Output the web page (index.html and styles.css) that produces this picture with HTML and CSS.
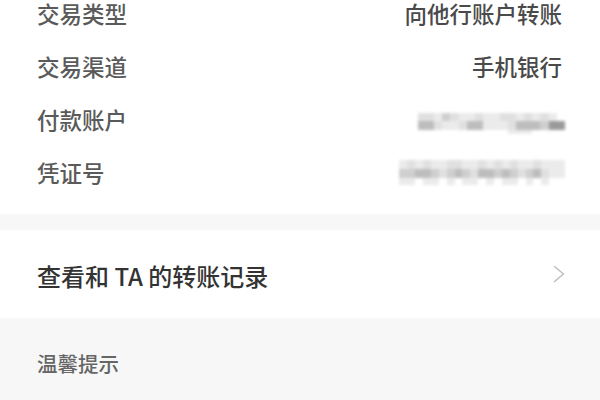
FILE: index.html
```html
<!DOCTYPE html>
<html lang="zh-CN">
<head>
<meta charset="utf-8">
<title>交易详情</title>
<link rel="stylesheet" href="styles.css">
</head>
<body>
<section class="card details">
  <div class="row row-first"><span class="label">交易类型</span><span class="value">向他行账户转账</span></div>
  <div class="row"><span class="label">交易渠道</span><span class="value">手机银行</span></div>
  <div class="row"><span class="label">付款账户</span>
    <span class="mosaic m-account">
      <i class="c2"></i><i class="c2"></i><i class="c1"></i><i class="c3"></i><i class="c2"></i><i class="c1"></i><i class="c1"></i><i class="c2"></i><i class="c1"></i><i class="c1"></i><i class="c2"></i><i class="c2"></i><i class="c1"></i><i class="c2"></i><i class="c1"></i><i class="c2"></i><i class="c1"></i><i class="c0"></i>
      <i class="c4"></i><i class="c4"></i><i class="c2"></i><i class="c1"></i><i class="c1"></i><i class="c2"></i><i class="c4"></i><i class="c4"></i><i class="c1"></i><i class="c1"></i><i class="c1"></i><i class="c2"></i><i class="c4"></i><i class="c4"></i><i class="c4"></i><i class="c3"></i><i class="c5"></i><i class="c5"></i>
      <i class="c0"></i><i class="c0"></i><i class="c0"></i><i class="c0"></i><i class="c0"></i><i class="c0"></i><i class="c0"></i><i class="c0"></i><i class="c0"></i><i class="c0"></i><i class="c0"></i><i class="c1"></i><i class="c1"></i><i class="c1"></i><i class="c0"></i><i class="c0"></i><i class="c0"></i><i class="c0"></i>
    </span>
  </div>
  <div class="row"><span class="label">凭证号</span>
    <span class="mosaic m-voucher">
      <i class="c1"></i><i class="c2"></i><i class="c1"></i><i class="c2"></i><i class="c1"></i><i class="c1"></i><i class="c2"></i><i class="c2"></i><i class="c1"></i><i class="c1"></i><i class="c2"></i><i class="c1"></i><i class="c2"></i><i class="c1"></i><i class="c2"></i><i class="c1"></i><i class="c1"></i><i class="c2"></i><i class="c1"></i><i class="c1"></i><i class="c1"></i>
      <i class="c3"></i><i class="c3"></i><i class="c4"></i><i class="c4"></i><i class="c3"></i><i class="c2"></i><i class="c3"></i><i class="c4"></i><i class="c3"></i><i class="c2"></i><i class="c4"></i><i class="c4"></i><i class="c3"></i><i class="c4"></i><i class="c3"></i><i class="c2"></i><i class="c3"></i><i class="c4"></i><i class="c2"></i><i class="c1"></i><i class="c1"></i>
      <i class="c1"></i><i class="c1"></i><i class="c0"></i><i class="c1"></i><i class="c1"></i><i class="c0"></i><i class="c1"></i><i class="c0"></i><i class="c1"></i><i class="c1"></i><i class="c0"></i><i class="c1"></i><i class="c0"></i><i class="c1"></i><i class="c1"></i><i class="c0"></i><i class="c1"></i><i class="c0"></i><i class="c1"></i><i class="c0"></i><i class="c0"></i>
    </span>
  </div>
</section>
<section class="card link">
  <span class="link-text">查看和 TA 的转账记录</span>
  <svg class="chevron" width="12" height="18" viewBox="0 0 12 18" aria-hidden="true">
    <polyline points="1.5,1.5 10.5,9 1.5,16.5" fill="none" stroke="#bdbdbd" stroke-width="1.5" stroke-linecap="round" stroke-linejoin="round"/>
  </svg>
</section>
<section class="tips">
  <h2 class="tips-title">温馨提示</h2>
</section>
</body>
</html>
```
FILE: styles.css
```css
html, body {
  margin: 0;
  padding: 0;
}
body {
  background: #f7f7f7;
  font-family: "Noto Sans CJK SC", "Noto Sans", sans-serif;
  width: 600px;
  height: 400px;
  overflow: hidden;
}
.card {
  background: #ffffff;
}
.details {
  padding-bottom: 15px;
  margin-bottom: 16px;
}
.row {
  height: 53px;
  display: flex;
  align-items: center;
  justify-content: space-between;
  padding: 0 38px 0 37px;
}
.row-first {
  height: 40px;
  align-items: flex-start;
}
.label {
  font-size: 22.5px;
  line-height: 27px;
  font-weight: 500;
  color: #5a5a5a;
}
.value {
  font-size: 22.5px;
  line-height: 27px;
  font-weight: 500;
  color: #4a4a4a;
}
.mosaic {
  display: grid;
  filter: blur(1.4px);
  margin-right: -3px;
}
.m-account {
  grid-template-columns: repeat(18, 8.2px);
  grid-template-rows: 8px 9px 4px;
  margin-top: 8px;
}
.m-voucher {
  grid-template-columns: repeat(21, 7.9px);
  grid-template-rows: 9px 9px 7px;
}
.mosaic i {
  display: block;
}
.c0 { background: #ffffff; }
.c1 { background: #ebebeb; }
.c2 { background: #e0e0e0; }
.c3 { background: #cfcfcf; }
.c4 { background: #bdbdbd; }
.c5 { background: #9a9a9a; }
.link {
  height: 88px;
  display: flex;
  align-items: center;
  justify-content: space-between;
  padding: 0 35px 0 37px;
}
.link-text {
  font-size: 24px;
  line-height: 30px;
  font-weight: 500;
  color: #333333;
  margin-top: 3px;
}
.chevron {
  display: block;
}
.tips {
  padding: 33px 37px;
}
.tips-title {
  margin: 0;
  font-size: 20.5px;
  line-height: 24px;
  font-weight: 500;
  color: #666666;
}
```
